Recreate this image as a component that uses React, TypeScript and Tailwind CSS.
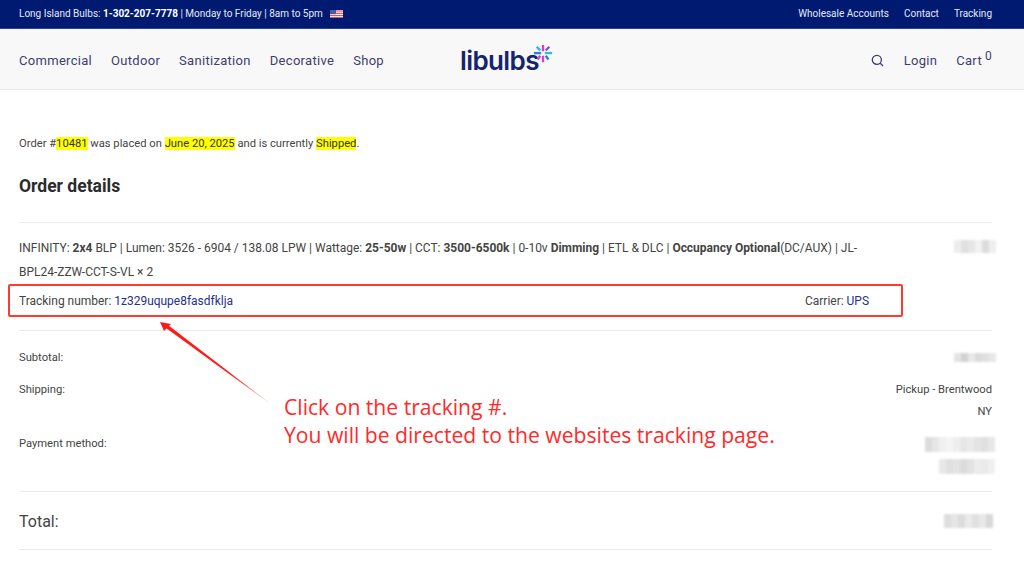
import React from "react";

const navItems = ["Commercial", "Outdoor", "Sanitization", "Decorative", "Shop"];

const Mark = ({ children }: { children: React.ReactNode }) => (
  <span className="bg-[#ffff00] text-[#333]">{children}</span>
);

// Pixelated smudge standing in for redacted values
const Smudge = ({ shades, h = "h-[11px]" }: { shades: string[]; h?: string }) => (
  <div className={`flex blur-[1px] ${h}`}>
    {shades.map((c, i) => (
      <div key={i} className="w-[7px] h-full" style={{ backgroundColor: c }} />
    ))}
  </div>
);

const Logo = () => (
  <div className="flex items-start">
    <span className="font-['Inter',sans-serif] font-semibold text-[26px] leading-[30px] tracking-[-0.6px] text-[#14246e] mt-[17px]">
      libulbs
    </span>
    <svg width="20" height="20" viewBox="0 0 22 22" className="-ml-[6px] mt-[15px]">
      <g strokeWidth="2.6" strokeLinecap="butt">
        <path d="M11 1v7M11 13v7" stroke="#d63fd0" />
        <path d="M1 10h8" stroke="#3a7be0" />
        <path d="M13 10h8" stroke="#30c4d0" />
        <path d="M4 3l4 4" stroke="#30b8d8" />
        <path d="M18 3l-4 4" stroke="#8a4fd8" />
        <path d="M5 17l3-4" stroke="#d63fd0" />
        <path d="M17 17l-3-4" stroke="#2f7fc8" />
      </g>
    </svg>
  </div>
);

const Flag = () => (
  <svg width="13" height="8" viewBox="0 0 13 8" className="ml-[7px] inline-block">
    <rect width="13" height="8" fill="#f4f4f4" />
    <path d="M0 1h13M0 3.3h13M0 5.6h13M0 7.6h13" stroke="#d9414f" strokeWidth="1" />
    <rect width="6" height="4.2" fill="#4a5a9a" />
  </svg>
);

export default function App() {
  return (
    <div className="relative w-[1024px] h-[561px] overflow-hidden bg-white font-['Roboto',sans-serif] text-[#444]">
      {/* Top bar */}
      <div className="h-[29px] bg-[#001a72] border-b border-[#2c3f8a] flex items-center justify-between pl-[19px] pr-[32px] pb-[1px] text-[10px] text-[#e4e8f4]">
        <div className="flex items-center">
          <span>
            Long Island Bulbs: <strong className="text-white font-bold">1-302-207-7778</strong> | Monday to Friday | 8am to 5pm
          </span>
          <Flag />
        </div>
        <div className="flex gap-[15px]">
          <span>Wholesale Accounts</span>
          <span>Contact</span>
          <span>Tracking</span>
        </div>
      </div>

      {/* Header */}
      <div className="relative h-[61px] bg-[#f8f8f8] border-b border-[#e8e8e8] flex items-center justify-between pl-[19px] pr-[32px] pt-[3px] text-[13px] text-[#3d3f70] tracking-[0.3px]">
        <div className="flex gap-[19px]">
          {navItems.map((n) => (
            <span key={n}>{n}</span>
          ))}
        </div>
        <div className="absolute left-[460px] top-0">
          <Logo />
        </div>
        <div className="flex items-center">
          <svg width="13" height="13" viewBox="0 0 14 14" fill="none" stroke="#3d3f70" strokeWidth="1.4" className="mr-[20px]">
            <circle cx="6.3" cy="6.3" r="4.9" />
            <path d="M10 10l3 3" />
          </svg>
          <span>Login</span>
          <span className="ml-[19px]">Cart</span>
          <span className="text-[12px] ml-[3px] -mt-[9px]">0</span>
        </div>
      </div>

      {/* Order */}
      <div className="pl-[19px] pr-[32px] text-[11.2px]">
        <p className="mt-[45px] leading-[18px]">
          Order #<Mark>10481</Mark> was placed on <Mark>June 20, 2025</Mark> and is currently <Mark>Shipped</Mark>.
        </p>
        <h2 className="mt-[21px] text-[17.5px] leading-[24px] font-bold text-[#2b2b2b]">Order details</h2>

        <div className="mt-[24px] border-t border-[#ebebeb] pt-[13px] pb-[17px] border-b flex justify-between text-[11.97px]">
          <div className="w-[860px]">
            <p className="leading-[24px]">
              INFINITY: <b>2x4</b> BLP | Lumen: 3526 - 6904 / 138.08 LPW | Wattage: <b>25-50w</b> | CCT: <b>3500-6500k</b> | 0-10v <b>Dimming</b> | ETL &amp; DLC | <b>Occupancy Optional</b>(DC/AUX) | JL-BPL24-ZZW-CCT-S-VL × 2
            </p>
            <div className="flex mt-[5px] leading-[24px]">
              <span className="w-[786px]">
                Tracking number: <span className="text-[#26308f]">1z329uqupe8fasdfklja</span>
              </span>
              <span>
                Carrier: <span className="text-[#26308f]">UPS</span>
              </span>
            </div>
          </div>
          <div className="mt-[4px] -mr-[4px]">
            <Smudge shades={["#ededed", "#e0e0e0", "#e6e6e6", "#f2f2f2", "#dcdcdc", "#efefef"]} h="h-[13px]" />
          </div>
        </div>

        <div className="flex justify-between pt-[16px] leading-[22px]">
          <span>Subtotal:</span>
          <div className="mt-[6px] -mr-[4px]">
            <Smudge shades={["#e4e4e4", "#d2d2d2", "#e8e8e8", "#dcdcdc", "#e0e0e0", "#e8e8e8"]} h="h-[9px]" />
          </div>
        </div>
        <div className="flex justify-between mt-[10px] leading-[22px]">
          <span>Shipping:</span>
          <span className="text-right">
            Pickup - Brentwood
            <br />
            NY
          </span>
        </div>
        <div className="relative flex justify-between mt-[10px] border-b border-[#ebebeb] h-[59px]">
          <span className="leading-[22px]">Payment method:</span>
          <div className="flex flex-col items-end mt-[4px] gap-[7px] -mr-[3px]">
            <Smudge shades={["#dcdcdc", "#e6e6e6", "#f0f0f0", "#f4f4f4", "#eeeeee", "#e6e6e6", "#eaeaea", "#e4e4e4", "#e0e0e0", "#e8e8e8"]} h="h-[15px]" />
            <Smudge shades={["#e8e8e8", "#e0e0e0", "#e4e4e4", "#dcdcdc", "#e2e2e2", "#ececec", "#eaeaea", "#f0f0f0"]} h="h-[15px]" />
          </div>
        </div>
        <div className="h-[58px] border-b border-[#ebebeb] flex items-center justify-between text-[16px] pt-[2px]">
          <span>Total:</span>
          <div className="-mr-[1px] -mt-[2px]">
            <Smudge shades={["#dedede", "#e6e6e6", "#dcdcdc", "#eaeaea", "#e0e0e0", "#e8e8e8", "#d8d8d8"]} h="h-[14px]" />
          </div>
        </div>
      </div>

      {/* Annotation overlay */}
      <div className="absolute left-[8px] top-[284px] w-[895px] h-[33px] border-2 border-[#ff3b30] rounded-[2px]" />
      <svg className="absolute left-0 top-0" width="1024" height="561" viewBox="0 0 1024 561" fill="none">
        <defs>
          <linearGradient id="tail" gradientUnits="userSpaceOnUse" x1="165" y1="326" x2="272" y2="405">
            <stop offset="0" stopColor="#ff1a1a" />
            <stop offset="0.6" stopColor="#ff1a1a" />
            <stop offset="1" stopColor="#ff1a1a" stopOpacity="0.35" />
          </linearGradient>
        </defs>
        <path d="M168 325L272 405L166 328Z" fill="url(#tail)" />
        <path d="M160 322L171 324L164 331Z" fill="#ff1a1a" />
      </svg>
      <div className="absolute left-[284px] top-[393px] text-[21.13px] leading-[28px] text-[#ff2a2a] font-['Open_Sans',sans-serif]">
        Click on the tracking #.
        <br />
        You will be directed to the websites tracking page.
      </div>
    </div>
  );
}
